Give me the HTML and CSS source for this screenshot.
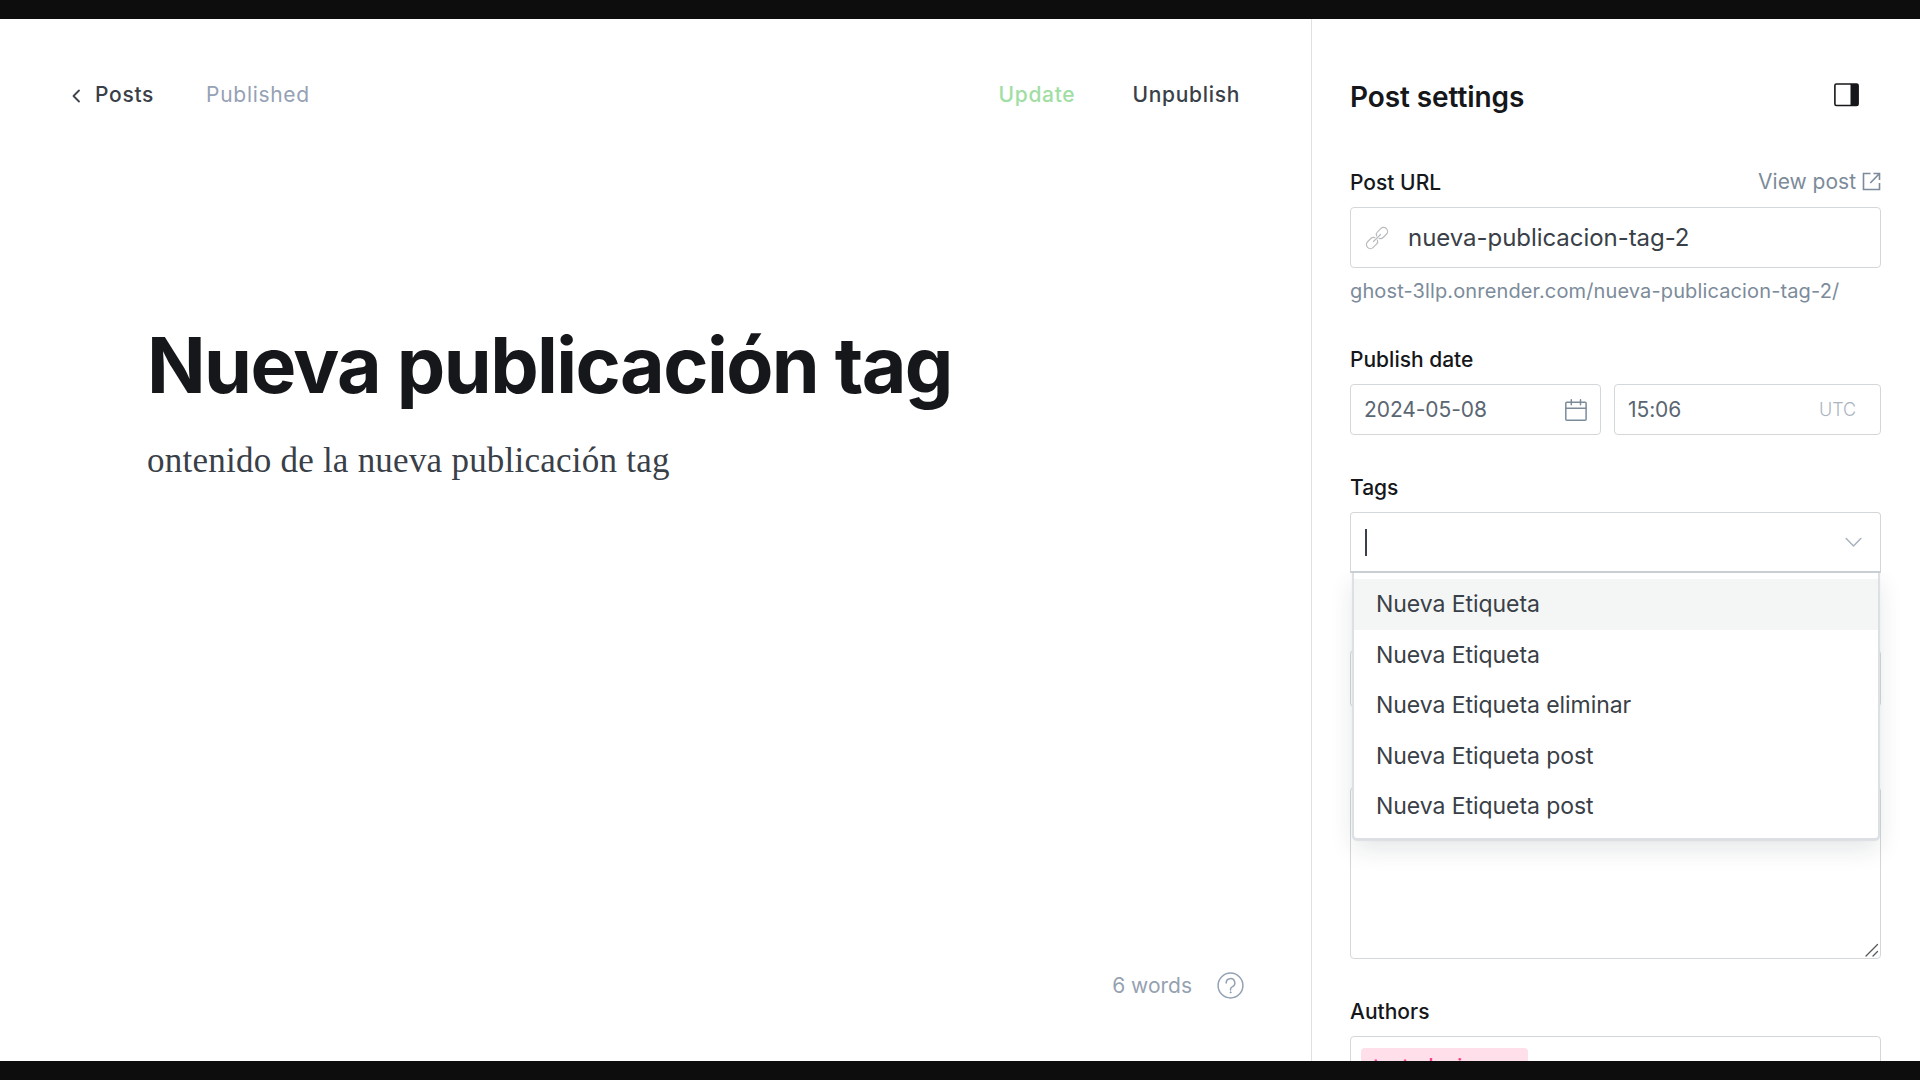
FILE: index.html
```html
<!DOCTYPE html>
<html lang="es">
<head>
<meta charset="utf-8">
<title>Post settings</title>
<link rel="stylesheet" href="styles.css">
</head>
<body>
<div class="screen">
  <main class="editor">
    <header class="toolbar">
      <svg class="back-icon" width="9" height="14" viewBox="0 0 9 14" fill="none" stroke="#3c444d" stroke-width="1.8" stroke-linecap="round" stroke-linejoin="round"><path d="M7 1.5 1.5 7 7 12.5"/></svg>
      <a class="back">Posts</a>
      <span class="status">Published</span>
      <a class="update">Update</a>
      <a class="unpublish">Unpublish</a>
    </header>
    <h1 class="title">Nueva publicación tag</h1>
    <p class="content">ontenido de la nueva publicación tag</p>
    <footer class="wordcount">
      <span>6 words</span>
      <svg width="27" height="27" viewBox="0 0 27 27" fill="none" stroke="#93a2b3" stroke-width="1.5" stroke-linecap="round"><circle cx="13.5" cy="13.5" r="12.4"/><path d="M9.2 10.9a4.3 4.3 0 1 1 6.3 3.8c-1.300.7-2 1.300-2 2.700v.5"/><circle cx="13.5" cy="20.3" r=".6" fill="#93a2b3" stroke-width=".8"/></svg>
    </footer>
  </main>
  <aside class="settings">
    <div class="settings-head">
      <h2>Post settings</h2>
      <svg width="25" height="24" viewBox="0 0 25 24"><rect x=".9" y="1" width="23.2" height="21.5" rx="1.5" fill="none" stroke="#15171a" stroke-width="1.6"/><path d="M16.5 1h7.600v21.500h-7.600z" fill="#15171a"/></svg>
    </div>
    <div class="label-row">
      <label class="label">Post URL</label>
      <a class="view">View post
        <svg width="19" height="19" viewBox="0 0 19 19" fill="none" stroke="#7c8b9a" stroke-width="1.6"><path d="M8.500 1.500H1.500v16h16V11M11.500 1.500h6V8M17.500 1.500 8.300 11"/></svg>
      </a>
    </div>
    <div class="input url">
      <svg width="22" height="22" viewBox="0 0 22 22" fill="none" stroke="#b9bcbf" stroke-width="1.2" stroke-linecap="round"><g transform="rotate(-45 11 11)"><path d="M9.800 9.200A3.700 3.700 0 0 0 6.300 7H1.700a4 4 0 0 0 0 8h4.600a3.700 3.700 0 0 0 3.500-2.200"/><path d="M12.200 12.800a3.700 3.700 0 0 0 3.500 2.200h4.600a4 4 0 0 0 0-8h-4.600a3.700 3.700 0 0 0-3.500 2.200"/><path d="M6 11h10"/></g></svg>
      <span>nueva-publicacion-tag-2</span>
    </div>
    <p class="hint">ghost-3llp.onrender.com/nueva-publicacion-tag-2/</p>
    <label class="label date-label">Publish date</label>
    <div class="datetime">
      <div class="input date"><span>2024-05-08</span>
        <svg width="22" height="22" viewBox="0 0 22 22" fill="none" stroke="#7c8b9a" stroke-width="1.5" stroke-linecap="round" stroke-linejoin="round"><rect x=".8" y="3.2" width="20.3" height="18" rx="1"/><path d="M.8 9.300h20.300M6.300.8v5M15.500.8v5"/></svg>
      </div>
      <div class="input time"><span>15:06</span><span class="zone">UTC</span></div>
    </div>
    <label class="label tags-label">Tags</label>
    <div class="input tags">
      <i class="caret"></i>
      <svg width="17" height="11" viewBox="0 0 17 11" fill="none" stroke="#abb4be" stroke-width="1.6" stroke-linecap="round" stroke-linejoin="round"><path d="M1.200 1.500 8.500 9l7.300-7.500"/></svg>
      <ul class="menu">
        <li class="active">Nueva Etiqueta</li>
        <li>Nueva Etiqueta</li>
        <li>Nueva Etiqueta eliminar</li>
        <li>Nueva Etiqueta post</li>
        <li>Nueva Etiqueta post</li>
      </ul>
    </div>
    <div class="input access"></div>
    <div class="input excerpt">
      <svg width="14" height="14" viewBox="0 0 14 14" stroke="#55585c" stroke-width="1.3" stroke-linecap="round"><path d="M1 13 12.500 1.500M8 13l4.500-4.500"/></svg>
    </div>
    <label class="label authors-label">Authors</label>
    <div class="input authors"><span class="token">testerlucian <b>×</b></span></div>
  </aside>
</div>
</body>
</html>
```
FILE: styles.css
```css
* { box-sizing: border-box; margin: 0; padding: 0; }
body {
  width: 1920px;
  height: 1080px;
  overflow: hidden;
  background: #fff;
  font-family: Inter, sans-serif;
  color: #15171a;
}
svg { display: block; flex: none; overflow: visible; }
.screen {
  display: flex;
  height: 1080px;
  border-top: 19px solid #0d0d0d;
  border-bottom: 19px solid #0d0d0d;
  overflow: hidden;
}
.editor {
  display: flex;
  flex-direction: column;
  width: 1311px;
  padding: 61px 68px 60px 72px;
}
.toolbar {
  display: flex;
  align-items: center;
  height: 30px;
  font-size: 21px;
  line-height: 30px;
  letter-spacing: .7px;
  font-weight: 500;
  color: #394047;
}
.back-icon { margin-top: 2px; }
.back { margin-left: 14px; }
.status { margin-left: 52px; font-weight: 400; color: #95a1b5; }
.update { margin-left: auto; color: #a0dea4; }
.unpublish { margin-left: 57px; margin-right: 3px; }
.title {
  margin: 213px 0 0 75px;
  font-size: 77px;
  line-height: 84px;
  letter-spacing: -1.6px;
  font-weight: 700;
  white-space: nowrap;
}
.content {
  margin: 27px 0 0 75px;
  font-family: "Liberation Serif", serif;
  font-size: 35px;
  line-height: 54px;
  letter-spacing: .24px;
  color: #394047;
}
.wordcount {
  display: flex;
  justify-content: flex-end;
  align-items: center;
  gap: 25px;
  height: 30px;
  margin-top: auto;
  font-size: 21px;
  line-height: 30px;
  color: #95a1b1;
}
.wordcount svg { margin-right: -1px; margin-bottom: 2px; }
.settings {
  display: flex;
  flex-direction: column;
  width: 609px;
  padding: 61px 39px 0 38px;
  border-left: 1px solid #dfe1e3;
}
.settings > * { flex: none; }
.settings-head {
  display: flex;
  justify-content: space-between;
  height: 88px;
  padding-right: 22px;
}
.settings-head h2 { font-size: 28px; line-height: 34px; font-weight: 600; letter-spacing: -.09px; }
.settings-head svg { margin-top: 3px; }
.label { display: block; font-size: 21px; line-height: 30px; font-weight: 500; }
.label-row { display: flex; justify-content: space-between; height: 39px; }
.view {
  display: flex;
  gap: 6px;
  margin-top: -1px;
  font-size: 21px;
  line-height: 30px;
  color: #7c8b9a;
}
.view svg { margin-top: 5px; }
.input {
  display: flex;
  align-items: center;
  border: 1px solid #d4d7d9;
  border-radius: 4px;
  color: #394047;
}
.url { height: 61px; padding-left: 15px; gap: 20px; font-size: 24px; letter-spacing: -.05px; }
.hint { margin-top: 10px; font-size: 20px; line-height: 26px; letter-spacing: .13px; color: #7c8b9a; }
.date-label { margin-top: 41px; }
.datetime { display: grid; grid-template-columns: 251px 267px; gap: 13px; margin-top: 9px; }
.date, .time {
  justify-content: space-between;
  height: 51px;
  padding: 0 13px;
  font-size: 21px;
  letter-spacing: -.08px;
  color: #5a6672;
}
.time .zone { margin-right: 11px; font-size: 18px; font-weight: 300; color: #abb4be; }
.tags-label { margin-top: 38px; }
.tags {
  position: relative;
  justify-content: space-between;
  height: 61px;
  margin-top: 9px;
  padding: 0 18px 0 14px;
  border-bottom: 2px solid #c8ced2;
  border-radius: 4px 4px 0 0;
}
.caret { width: 1.5px; height: 27px; background: #394047; }
.menu {
  position: absolute;
  z-index: 2;
  left: 3px;
  right: 2px;
  top: 60px;
  padding: 6px 0 6px;
  border-radius: 0 0 3px 3px;
  background: #fff;
  box-shadow: 0 1px 1px 2px #dcdfe3, 0 10px 26px rgba(20, 30, 40, .12);
  clip-path: inset(0 -40px -50px);
  list-style: none;
  font-size: 23px;
  line-height: 50.5px;
  letter-spacing: -.06px;
}
.menu li { padding-left: 22px; }
.menu .active { background: #f4f5f5; }
.access { height: 57px; margin-top: 77px; }
.excerpt { height: 172px; margin-top: 80px; padding: 1px 1px; justify-content: flex-end; align-items: flex-end; }
.authors-label { margin-top: 38px; }
.authors { height: 61px; margin-top: 9px; padding-left: 10px; }
.token {
  display: flex;
  align-items: center;
  justify-content: space-between;
  width: 167px;
  height: 38px;
  padding: 0 11px 2px 12px;
  border-radius: 4px;
  background: #ffdfe9;
  color: #fb3c86;
  font-size: 20px;
  font-weight: 500;
}
.token b { font-weight: 400; font-size: 22px; line-height: 20px; }
```
